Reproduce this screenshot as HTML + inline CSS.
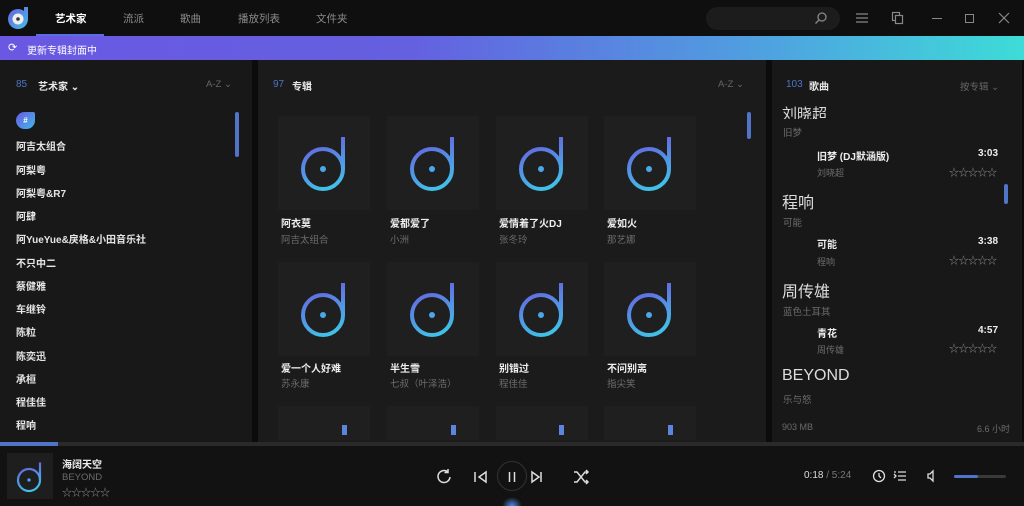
<!DOCTYPE html>
<html><head><meta charset="utf-8"><style>
*{margin:0;padding:0;box-sizing:border-box}
body{width:1024px;height:506px;overflow:hidden;background:#0c0c0d;font-family:"Liberation Sans","Noto Sans CJK SC",sans-serif;color:#e8e8e8;position:relative;font-size:10px}
.a{position:absolute}
.top{left:0;top:0;width:1024px;height:36px;background:#0f0f10}
.tab{top:11px;font-size:10.5px;color:#8a8a8a}
.banner{left:0;top:36px;width:1024px;height:24px;background:linear-gradient(90deg,#6a58e2 0%,#6460e0 40%,#4fa2e0 75%,#3ddcd8 100%)}
.panel{top:60px;height:382px;background:#181819}
.cover{width:92px;height:94px;background:#1f1f20}
.t{font-size:10px;color:#eee;font-weight:bold}
.s{font-size:9.5px;color:#6c6c6c}
.art{left:16px;font-size:10px;font-weight:bold;color:#e6e6e6}
.stars{color:#888;font-size:10px;letter-spacing:-0.5px}
</style></head><body>
<div class="a top"></div>
<svg class="a" style="left:7px;top:6px" width="24" height="24" viewBox="0 0 24 24"><defs><linearGradient id="lg" gradientUnits="userSpaceOnUse" x1="0" y1="0" x2="24" y2="24"><stop offset="0" stop-color="#6a5ae0"/><stop offset="1" stop-color="#40c8e8"/></linearGradient></defs><circle cx="11" cy="13" r="10" fill="url(#lg)"/><circle cx="11" cy="13" r="5.5" fill="#eee"/><circle cx="11" cy="13" r="1.8" fill="#333"/><rect x="17" y="1" width="4" height="12" fill="url(#lg)"/></svg>
<div class="a tab" style="left:55px;color:#fff;font-weight:bold">艺术家</div>
<div class="a" style="left:36px;top:34px;width:68px;height:2px;background:#5a6ce6"></div>
<div class="a tab" style="left:123px">流派</div>
<div class="a tab" style="left:180px">歌曲</div>
<div class="a tab" style="left:238px">播放列表</div>
<div class="a tab" style="left:316px">文件夹</div>
<div class="a" style="left:706px;top:7px;width:134px;height:23px;border-radius:12px;background:#1c1c1d"></div>
<svg class="a" style="left:814px;top:11px" width="14" height="14" viewBox="0 0 14 14" fill="none" stroke="#888" stroke-width="1.3"><circle cx="8" cy="6" r="4"/><path d="M5 9L1.5 12.5"/></svg>
<svg class="a" style="left:855px;top:12px" width="14" height="12" fill="none" stroke="#888" stroke-width="1.2"><path d="M1 2h12M1 6h12M1 10h12"/></svg>
<svg class="a" style="left:891px;top:11px" width="14" height="14" fill="none" stroke="#888" stroke-width="1.2"><rect x="1.5" y="1.5" width="7" height="8"/><rect x="4.5" y="4.5" width="7" height="8" fill="#0f0f10"/></svg>
<div class="a" style="left:932px;top:18px;width:10px;height:1px;background:#888"></div>
<div class="a" style="left:965px;top:14px;width:9px;height:9px;border:1.2px solid #888"></div>
<svg class="a" style="left:998px;top:12px" width="12" height="12" stroke="#888" stroke-width="1.2"><path d="M1 1l10 10M11 1L1 11"/></svg>

<div class="a banner"></div>
<div class="a" style="left:8px;top:41px;font-size:11px;color:#fff">⟳</div>
<div class="a" style="left:27px;top:42px;font-size:10px;color:#fff">更新专辑封面中</div>

<div class="a panel" style="left:0;width:252px"></div>
<div class="a panel" style="left:258px;width:508px;background:#1b1b1c"></div>
<div class="a panel" style="left:772px;width:250px"></div>

<div class="a" style="left:16px;top:79px;font-size:10px;color:#4f74c8">85</div>
<div class="a" style="left:38px;top:78px;font-size:10px;font-weight:bold">艺术家 ⌄</div>
<div class="a" style="left:206px;top:79px;font-size:9.5px;color:#666">A-Z ⌄</div>
<div class="a" style="left:16px;top:112px;width:19px;height:17px;border-radius:9px 2px 9px 9px;background:linear-gradient(135deg,#6a5ae0,#40b8e8);color:#fff;font-size:8px;text-align:center;line-height:17px;font-weight:bold">#</div>
<div class="a" style="left:235px;top:112px;width:4px;height:45px;border-radius:2px;background:#4f74c8"></div>
<div class="a art" style="top:138px">阿吉太组合</div>
<div class="a art" style="top:162px">阿梨粤</div>
<div class="a art" style="top:185px">阿梨粤&amp;R7</div>
<div class="a art" style="top:208px">阿肆</div>
<div class="a art" style="top:231px">阿YueYue&amp;戾格&amp;小田音乐社</div>
<div class="a art" style="top:255px">不只中二</div>
<div class="a art" style="top:278px">蔡健雅</div>
<div class="a art" style="top:301px">车继铃</div>
<div class="a art" style="top:324px">陈粒</div>
<div class="a art" style="top:348px">陈奕迅</div>
<div class="a art" style="top:371px">承桓</div>
<div class="a art" style="top:394px">程佳佳</div>
<div class="a art" style="top:417px">程响</div>

<div class="a" style="left:273px;top:79px;font-size:10px;color:#4f74c8">97</div>
<div class="a" style="left:292px;top:78px;font-size:10px;font-weight:bold">专辑</div>
<div class="a" style="left:718px;top:79px;font-size:9.5px;color:#666">A-Z ⌄</div>
<div class="a" style="left:747px;top:112px;width:4px;height:27px;border-radius:2px;background:#4f74c8"></div>

<svg width="0" height="0" style="position:absolute"><defs><linearGradient id="dg" gradientUnits="userSpaceOnUse" x1="-10" y1="-32" x2="10" y2="22"><stop offset="0" stop-color="#6a5ae0"/><stop offset="1" stop-color="#3ec8e8"/></linearGradient><g id="dl"><circle cx="0" cy="0" r="20" fill="none" stroke="url(#dg)" stroke-width="4"/><circle cx="0" cy="0" r="3" fill="#4aa8ea"/><path d="M20 0V-32" stroke="url(#dg)" stroke-width="4" fill="none"/></g></defs></svg>

<div class="a cover" style="left:278px;top:116px"></div><div class="a cover" style="left:387px;top:116px"></div><div class="a cover" style="left:496px;top:116px"></div><div class="a cover" style="left:604px;top:116px"></div>
<div class="a cover" style="left:278px;top:262px"></div><div class="a cover" style="left:387px;top:262px"></div><div class="a cover" style="left:496px;top:262px"></div><div class="a cover" style="left:604px;top:262px"></div>
<div class="a cover" style="left:278px;top:406px;height:34px"></div><div class="a cover" style="left:387px;top:406px;height:34px"></div><div class="a cover" style="left:496px;top:406px;height:34px"></div><div class="a cover" style="left:604px;top:406px;height:34px"></div>
<svg class="a" style="left:258px;top:100px" width="508" height="340">
<use href="#dl" x="65" y="69"/><use href="#dl" x="174" y="69"/><use href="#dl" x="283" y="69"/><use href="#dl" x="391" y="69"/>
<use href="#dl" x="65" y="215"/><use href="#dl" x="174" y="215"/><use href="#dl" x="283" y="215"/><use href="#dl" x="391" y="215"/>
<g fill="#5a86de"><rect x="84" y="325" width="5" height="10"/><rect x="193" y="325" width="5" height="10"/><rect x="301" y="325" width="5" height="10"/><rect x="410" y="325" width="5" height="10"/></g>
</svg>
<div class="a t" style="left:281px;top:215px">阿衣莫</div><div class="a s" style="left:281px;top:232px">阿吉太组合</div>
<div class="a t" style="left:390px;top:215px">爱都爱了</div><div class="a s" style="left:390px;top:232px">小洲</div>
<div class="a t" style="left:499px;top:215px">爱情着了火DJ</div><div class="a s" style="left:499px;top:232px">张冬玲</div>
<div class="a t" style="left:607px;top:215px">爱如火</div><div class="a s" style="left:607px;top:232px">那艺娜</div>
<div class="a t" style="left:281px;top:360px">爱一个人好难</div><div class="a s" style="left:281px;top:376px">苏永康</div>
<div class="a t" style="left:390px;top:360px">半生雪</div><div class="a s" style="left:390px;top:376px">七叔（叶泽浩）</div>
<div class="a t" style="left:499px;top:360px">别错过</div><div class="a s" style="left:499px;top:376px">程佳佳</div>
<div class="a t" style="left:607px;top:360px">不问别离</div><div class="a s" style="left:607px;top:376px">指尖笑</div>

<div class="a" style="left:786px;top:79px;font-size:10px;color:#4f74c8">103</div>
<div class="a" style="left:809px;top:78px;font-size:10px;font-weight:bold">歌曲</div>
<div class="a" style="left:960px;top:79px;font-size:9.5px;color:#666">按专辑 ⌄</div>
<div class="a" style="left:782px;top:103px;font-size:15px;color:#ddd;height:16px;overflow:hidden">刘晓超</div>
<div class="a s" style="left:783px;top:125px">旧梦</div>
<div class="a t" style="left:817px;top:148px">旧梦 (DJ默涵版)</div><div class="a t" style="left:978px;top:148px">3:03</div>
<div class="a s" style="left:817px;top:166px;font-size:9px">刘晓超</div><div class="a stars" style="left:949px;top:164px">☆☆☆☆☆</div>
<div class="a" style="left:1004px;top:184px;width:4px;height:20px;border-radius:2px;background:#4f74c8"></div>
<div class="a" style="left:782px;top:189px;font-size:16px;color:#ddd">程响</div>
<div class="a s" style="left:783px;top:215px">可能</div>
<div class="a t" style="left:817px;top:236px">可能</div><div class="a t" style="left:978px;top:236px">3:38</div>
<div class="a s" style="left:817px;top:255px;font-size:9px">程响</div><div class="a stars" style="left:949px;top:252px">☆☆☆☆☆</div>
<div class="a" style="left:782px;top:278px;font-size:16px;color:#ddd">周传雄</div>
<div class="a s" style="left:783px;top:304px">蓝色土耳其</div>
<div class="a t" style="left:817px;top:325px">青花</div><div class="a t" style="left:978px;top:325px">4:57</div>
<div class="a s" style="left:817px;top:343px;font-size:9px">周传雄</div><div class="a stars" style="left:949px;top:340px">☆☆☆☆☆</div>
<div class="a" style="left:782px;top:367px;font-size:16px;color:#ddd">BEYOND</div>
<div class="a s" style="left:783px;top:392px">乐与怒</div>
<div class="a s" style="left:782px;top:422px;font-size:9px">903 MB</div>
<div class="a s" style="left:977px;top:422px;font-size:9px">6.6 小时</div>

<div class="a" style="left:0;top:442px;width:1024px;height:4px;background:#2a2a2b"></div>
<div class="a" style="left:0;top:442px;width:58px;height:4px;background:#4f74c8"></div>
<div class="a" style="left:0;top:446px;width:1024px;height:60px;background:#121213"></div>
<div class="a" style="left:7px;top:453px;width:46px;height:46px;background:#1e1e1f"></div>
<svg class="a" style="left:7px;top:453px" width="46" height="46"><g transform="translate(22,27) scale(0.55)"><use href="#dl"/></g></svg>
<div class="a t" style="left:62px;top:456px">海阔天空</div>
<div class="a s" style="left:62px;top:472px">BEYOND</div>
<div class="a stars" style="left:62px;top:484px">☆☆☆☆☆</div>
<div class="a" style="left:497px;top:461px;width:30px;height:30px;border-radius:50%;border:1px solid #333"></div>
<svg class="a" style="left:436px;top:467px" width="160" height="20" fill="none" stroke="#ddd" stroke-width="1.5">
<path d="M12 5A6 6 0 1 0 14 10M12 2v3.5H8.5"/>
<path d="M39 5v10M50 5l-7 5 7 5z"/>
<path d="M73.5 5v10M78.5 5v10"/>
<path d="M105 5v10M96 5l7 5-7 5z"/>
<path d="M138 5h3l8 10h3M138 15h3l8-10h3M150 3l2 2-2 2M150 13l2 2-2 2"/>
</svg>
<div class="a" style="left:502px;top:497px;width:20px;height:9px;background:radial-gradient(ellipse at 50% 100%,#4f8be8,transparent 70%)"></div>
<div class="a" style="left:804px;top:470px;font-size:10px;color:#ddd">0:18 <span style="color:#777">/ 5:24</span></div>
<svg class="a" style="left:872px;top:469px" width="64" height="14" fill="none" stroke="#ddd" stroke-width="1.3"><circle cx="7" cy="7" r="5.5"/><path d="M7 4v3l2 2"/><path d="M22 3h2M26 3h8M26 7h8M26 11h8M22 5l2 2-2 2"/><path d="M56 5h2l3-3v10l-3-3h-2z"/></svg>
<div class="a" style="left:954px;top:475px;width:52px;height:3px;background:#3a3a3b;border-radius:2px"></div>
<div class="a" style="left:954px;top:475px;width:24px;height:3px;background:#4f74c8;border-radius:2px"></div>
</body></html>
